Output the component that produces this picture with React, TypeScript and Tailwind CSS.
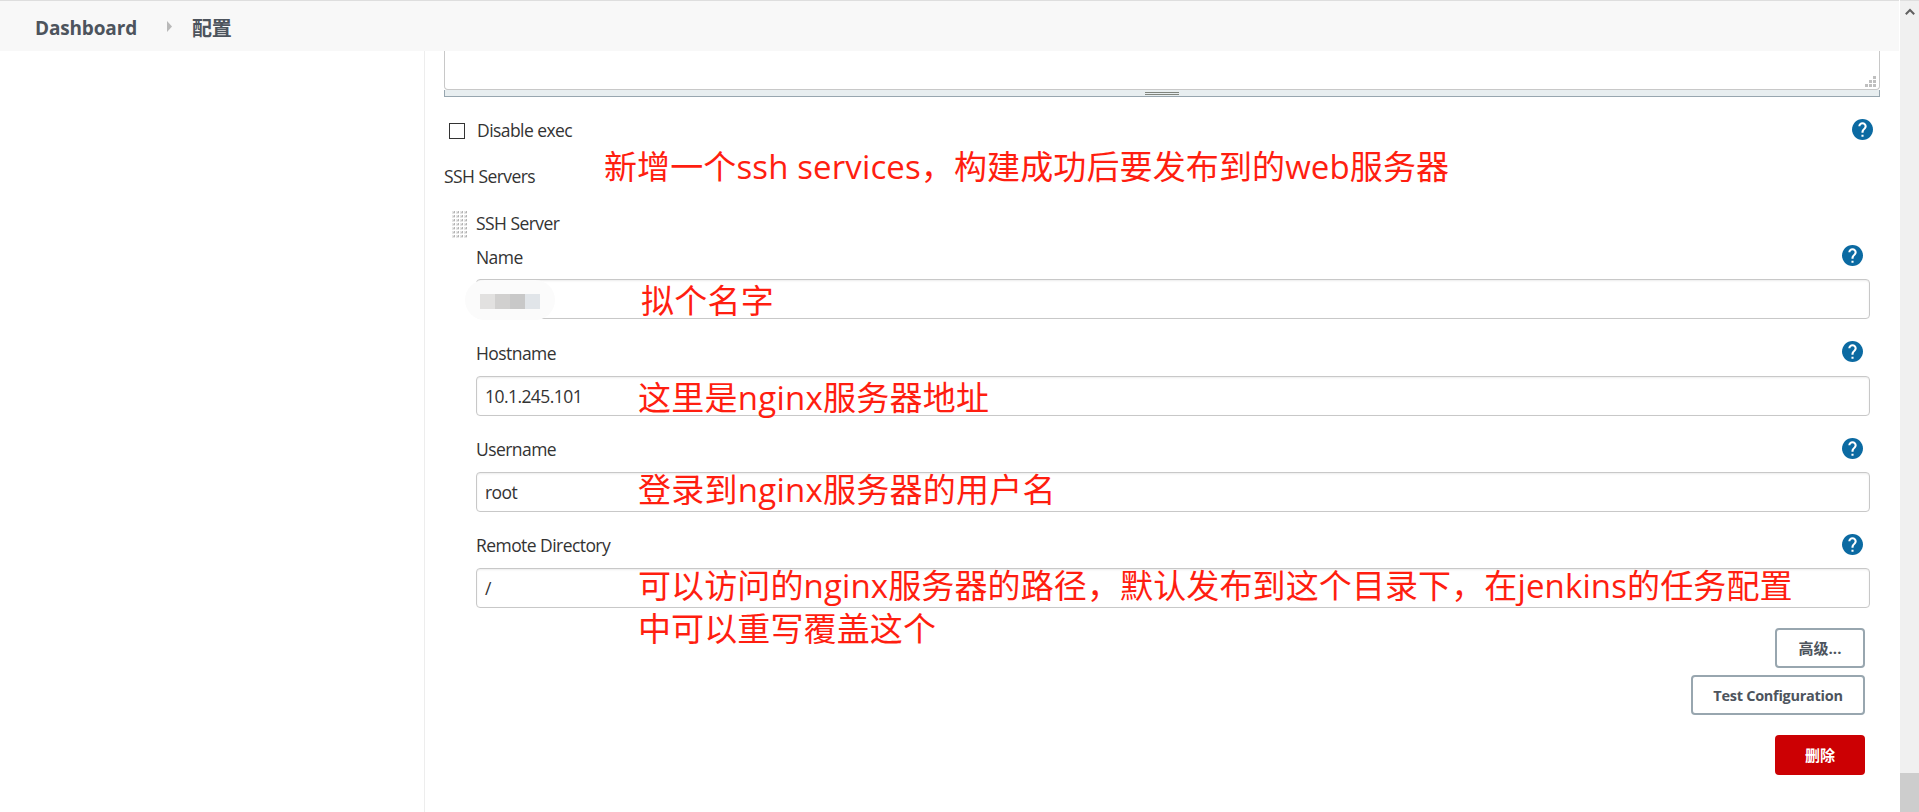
import type { ReactNode } from 'react';

function HelpIcon() {
  return (
    <svg className="block size-[21px] shrink-0" viewBox="2 2 20 20" aria-label="Help">
      <path
        fill="#0b6aa2"
        d="M12 2C6.48 2 2 6.48 2 12s4.48 10 10 10 10-4.48 10-10S17.52 2 12 2z"
      />
      <path
        fill="#fff"
        d="M13 19h-2v-2h2v2zm2.070-7.750l-.9.920C13.450 12.900 13 13.500 13 15h-2v-.5c0-1.100.450-2.100 1.170-2.830l1.240-1.260c.370-.360.590-.860.590-1.410 0-1.100-.9-2-2-2s-2 .9-2 2H8c0-2.210 1.790-4 4-4s4 1.790 4 4c0 .880-.360 1.680-.930 2.250z"
      />
    </svg>
  );
}

function DragHandle() {
  const rows = [0, 1, 2, 3, 4, 5, 6];
  const cols = [0, 1, 2, 3];
  return (
    <svg className="block h-[27px] w-[15px]" viewBox="0 0 15 27" shapeRendering="crispEdges">
      {rows.map((r) =>
        cols.map((c) => (
          <g key={`${r}-${c}`}>
            <rect x={c * 4} y={r * 4} width="3" height="3" fill="#e6e6e6" />
            <rect x={c * 4 + 1} y={r * 4 + 1} width="2" height="1" fill="#c8c8c8" />
            <rect x={c * 4 + 2} y={r * 4} width="1" height="2" fill="#b4b4b4" />
          </g>
        )),
      )}
    </svg>
  );
}

interface FieldProps {
  label: string;
  value: string;
  className: string;
  iconClassName?: string;
  inputClassName?: string;
}

function Field({ label, value, className, iconClassName = '', inputClassName = 'mt-[11px]' }: FieldProps) {
  return (
    <div className={className}>
      <div className="flex h-[24px] items-start justify-between pr-[7px]">
        <span>{label}</span>
        <div className={iconClassName}>
          <HelpIcon />
        </div>
      </div>
      <div
        className={`flex h-[40px] items-center rounded-[4px] border border-[#c8c8c8] bg-white pl-[8px] shadow-[inset_0_1px_2px_rgba(0,0,0,0.08)] ${inputClassName}`}
      >
        <span>{value}</span>
      </div>
    </div>
  );
}

function Note({ className, children }: { className: string; children: ReactNode }) {
  return (
    <div className={`absolute whitespace-nowrap text-[33px] leading-[43px] text-[#ff1e10] ${className}`}>
      {children}
    </div>
  );
}

export default function App() {
  return (
    <div className="relative flex h-[812px] w-[1919px] overflow-hidden bg-white font-['Open_Sans','Noto_Sans_CJK_SC',sans-serif] text-[17.5px] leading-[24px] tracking-[-0.56px] text-[#333]">
      <div className="flex w-[1899px] flex-col">
        <header className="flex h-[51px] shrink-0 items-center border-t border-[#dedede] bg-[#f8f8f8] pl-[35px] text-[19px] font-bold tracking-[-0.15px] text-[#4d545d]">
          <span className="mt-[4px] w-[102px]">Dashboard</span>
          <svg className="ml-[30px] block h-[11px] w-[5px]" viewBox="0 0 5 11">
            <path d="M0 0l5 5.500-5 5.500z" fill="#b9b9b9" />
          </svg>
          <span className="mt-[5px] ml-[20px] text-[20px]">配置</span>
        </header>
        <div className="flex grow">
          <aside className="w-[425px] border-r border-[#ededed]" />
          <main className="w-[1455px] pl-[19px]">
            <div className="flex h-[39px] items-end justify-end rounded-b-[4px] border border-t-0 border-[#c8c8c8] pr-[3px] pb-[2px]">
              <svg className="block size-[11px]" viewBox="0 0 11 11" fill="#bfbfbf">
                <path d="M8 0h3v3h-3zM4 4h3v3h-3zM8 4h3v3h-3zM0 8h3v3h-3zM4 8h3v3h-3zM8 8h3v3h-3z" />
              </svg>
            </div>
            <div className="flex h-[7px] justify-center border border-t-0 border-[#98a6af] bg-[#e8eef0] pt-[2px]">
              <div className="h-[3px] w-[34px] border-y border-[#80857e]" />
            </div>

            <div className="mt-[21px] flex h-[24px] items-start pr-[7px] pl-[5px]">
              <div className="mt-[5px] size-[16px] border border-[#333] bg-white" />
              <span className="ml-[12px] grow">Disable exec</span>
              <div className="mt-px">
                <HelpIcon />
              </div>
            </div>
            <div className="mt-[22px]">SSH Servers</div>

            <div className="mt-[23px] flex pr-[10px]">
              <div className="w-[32px] pl-[8px]">
                <DragHandle />
              </div>
              <div className="grow">
                <div>SSH Server</div>
                <Field className="mt-[10px]" inputClassName="mt-[10px]" label="Name" value="" />
                <Field className="mt-[22px]" label="Hostname" value="10.1.245.101" />
                <Field className="mt-[21px]" iconClassName="mt-px" label="Username" value="root" />
                <Field className="mt-[21px]" iconClassName="mt-px" label="Remote Directory" value="/" />
                <div className="mt-[20px] flex flex-col items-end pr-[5px] text-[14.500px] font-bold tracking-[-0.28px] text-[#4d545d]">
                  <button className="h-[40px] w-[90px] rounded-[4px] border-2 border-[#98a6af] bg-white text-[15px] tracking-normal">
                    高级...
                  </button>
                  <button className="mt-[7px] h-[40px] w-[174px] rounded-[4px] border-2 border-[#98a6af] bg-white pt-px">
                    Test Configuration
                  </button>
                  <button className="mt-[20px] h-[40px] w-[90px] rounded-[4px] bg-[#cc0003] text-[15px] tracking-normal text-white">
                    删除
                  </button>
                </div>
              </div>
            </div>
          </main>
        </div>
      </div>

      <div className="ml-px flex w-[19px] flex-col items-center justify-between border-t border-[#dedede] bg-[#f0f0f0]">
        <svg className="mt-[7px] block h-[8px] w-[10px]" viewBox="0 0 10 8">
          <path d="M0.800 6.300L5 2l4.200 4.300" fill="none" stroke="#606060" strokeWidth="2" />
        </svg>
        <div className="h-[39px] w-full bg-[#cdcdcd]" />
      </div>

      <div className="absolute top-[280px] left-[465px] h-[40px] w-[90px] rounded-[20px] bg-[#fbfbfb]" />
      <div className="absolute top-[294px] left-[480px] flex h-[15px]">
        <div className="w-[15px] bg-[#e2e1e0]" />
        <div className="w-[15px] bg-[#d1d0cf]" />
        <div className="w-[15px] bg-[#c8c8c8]" />
        <div className="w-[15px] bg-[#e1e5e9]" />
      </div>

      <Note className="top-[145px] left-[604px] tracking-[0.12px]">
        新增一个ssh services，构建成功后要发布到的web服务器
      </Note>
      <Note className="top-[279px] left-[641px] tracking-[0.25px]">拟个名字</Note>
      <Note className="top-[376px] left-[638px] tracking-[0.25px]">这里是nginx服务器地址</Note>
      <Note className="top-[468px] left-[638px] tracking-[0.25px]">登录到nginx服务器的用户名</Note>
      <Note className="top-[564px] left-[638px] tracking-[0.12px]">
        可以访问的nginx服务器的路径，默认发布到这个目录下，在jenkins的任务配置
        <br />
        中可以重写覆盖这个
      </Note>
    </div>
  );
}
